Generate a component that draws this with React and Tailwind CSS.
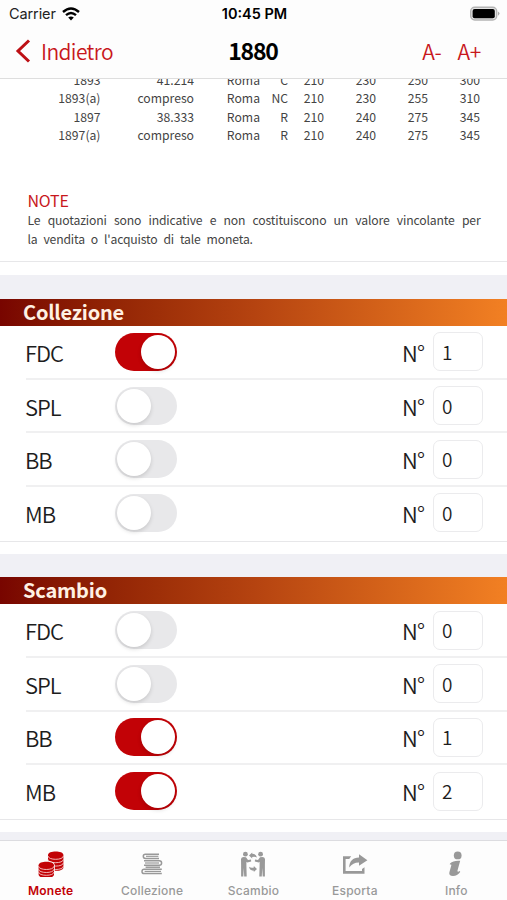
import { useState } from 'react';

const PRICES = [
  ['1893', '41.214', 'Roma', 'C', '210', '230', '250', '300'],
  ['1893(a)', 'compreso', 'Roma', 'NC', '210', '230', '255', '310'],
  ['1897', '38.333', 'Roma', 'R', '210', '240', '275', '345'],
  ['1897(a)', 'compreso', 'Roma', 'R', '210', '240', '275', '345'],
];

const COLLECTION = [
  { grade: 'FDC', on: true, count: 1 },
  { grade: 'SPL', on: false, count: 0 },
  { grade: 'BB', on: false, count: 0 },
  { grade: 'MB', on: false, count: 0 },
];

const EXCHANGE = [
  { grade: 'FDC', on: false, count: 0 },
  { grade: 'SPL', on: false, count: 0 },
  { grade: 'BB', on: true, count: 1 },
  { grade: 'MB', on: true, count: 2 },
];

function CoinStack({ x, y, rims }) {
  const bottom = 4 + rims.length * 3;
  return (
    <g transform={`translate(${x} ${y})`}>
      <path
        d={`M0 3.6C0-1 15.4-1 15.4 3.6V${bottom}C15.4 ${bottom + 4.6} 0 ${bottom + 4.6} 0 ${bottom}Z`}
        stroke="#fdfdfd"
        strokeWidth="1.6"
        paintOrder="stroke"
      />
      {rims.map((rim) => (
        <path key={rim} d={`M0 ${rim}C0 ${rim + 4.4} 15.4 ${rim + 4.4} 15.4 ${rim}`} fill="none" stroke="#f6c9c9" strokeWidth="0.9" />
      ))}
    </g>
  );
}

function CoinsIcon() {
  return (
    <svg width="26" height="26" viewBox="0 0 26 26" fill="currentColor">
      <CoinStack x={10} y={0.4} rims={[4.6, 8, 11.4, 14.8]} />
      <CoinStack x={0.6} y={10.6} rims={[4.6, 7.6, 10.4]} />
    </svg>
  );
}

function BooksIcon() {
  return (
    <svg width="22" height="24" viewBox="0 0 22 24" fill="none" stroke="currentColor" strokeWidth="1.5">
      <path d="M18 2.2H4.4a1.9 1.9 0 0 0 0 4.2H18" />
      <path d="M5 4.3H17.4" strokeWidth="1.2" />
      <path d="M3 8.7h15.3a2.2 2.2 0 0 1 0 4.6H3" />
      <path d="M4 11h14" strokeWidth="1.2" />
      <path d="M19 15.2H4.6" />
      <path d="M20.8 17.2H3.2a2.1 2.1 0 0 0 0 4.4h17.6" />
      <path d="M3.6 19.4H20" strokeWidth="1.2" />
    </svg>
  );
}

function ExchangeIcon() {
  return (
    <svg width="26" height="26" viewBox="0 0 26 26" fill="currentColor">
      <circle cx="5.4" cy="3.2" r="2.4" />
      <circle cx="20.6" cy="3.2" r="2.4" />
      <path d="M1 8Q1.4 6 3.6 6L6 6.2 8 9l3-.4.2 1.9-4 .9-.8-.7v4l.3 10.7H4.2L3.8 17l-.5 8.4H1.1V14Z" />
      <path d="M25 8Q24.6 6 22.4 6L20 6.2 18 9l-3-.4-.2 1.9 4 .9.8-.7v4l-.3 10.7h2.5l.4-8.4.5 8.4h2.2V14Z" />
      <path d="M9 4.4L12.2 1.4V2.8Q16 2.4 17 6.6 14.8 5.2 12.2 6V7.4Z" />
      <path d="M17 18L13.8 21V19.6Q10 20 9 15.8 11.2 17.2 13.8 16.4V15Z" />
    </svg>
  );
}

function ExportIcon() {
  return (
    <svg width="26" height="24" viewBox="0 0 26 24" fill="currentColor">
      <path d="M9.2 4.3H1v17.4h21.5v-6.4l-2.5 1.8v2H3.6V6.9h3.6Z" />
      <path d="M7.2 15.6C7.5 9.4 10.7 5.6 17 5.6V2.2l8.4 6-8.4 5.6v-3.3c-4-.1-7 1.5-9.8 5.1Z" />
    </svg>
  );
}

function InfoIcon() {
  return (
    <svg width="16" height="26" viewBox="0 0 16 26" fill="currentColor">
      <circle cx="9.7" cy="4.4" r="3.9" />
      <path d="M2 12.6C4.5 10.3 7.5 9.4 12.2 9.8l-2.7 9.8c-.3 1.3.4 1.6 2.4.5l.3.9C10.2 23.6 7.9 25.1 5 25.1c-3 0-4.2-1.5-3.6-3.8l1.8-6.5c.3-1.1.1-1.5-1.4-1.2Z" />
    </svg>
  );
}

const TABS = [
  { label: 'Monete', Icon: CoinsIcon, active: true },
  { label: 'Collezione', Icon: BooksIcon },
  { label: 'Scambio', Icon: ExchangeIcon },
  { label: 'Esporta', Icon: ExportIcon },
  { label: 'Info', Icon: InfoIcon },
];

function StatusBar() {
  return (
    <div className="grid h-7 grid-cols-3 items-center pl-[9px] pr-[7px] font-['Inter',sans-serif] text-[14.5px] text-[#222]">
      <div className="flex items-center gap-[6px]">
        <span className="tracking-[-0.1px]">Carrier</span>
        <svg width="18" height="14" viewBox="0 0 18 14" fill="none" stroke="#000" strokeWidth="2.4">
          <path d="M1 5Q9-2 17 5M4 8.2Q9 3.8 14 8.2" />
          <path d="M6.2 10.5Q9 8.3 11.8 10.5L9 13.5Z" fill="#000" stroke="none" />
        </svg>
      </div>
      <span className="whitespace-nowrap text-center font-semibold text-black">10:45 PM</span>
      <svg className="justify-self-end" width="31" height="16" viewBox="0 0 31 16">
        <rect x="1.7" y="1.2" width="26" height="12.8" rx="4" fill="#e4e4e4" stroke="#b4b4b4" strokeWidth="1.4" />
        <rect x="3.6" y="3" width="22.2" height="9.2" rx="2" fill="#000" />
        <path d="M29.2 5.4q2.4 2.2 0 4.4z" fill="#999" />
      </svg>
    </div>
  );
}

function NavBar() {
  return (
    <div className="grid h-[50px] grid-cols-3 items-center pb-[5px] pl-[15px] pr-[26px] text-[21px] text-[#c8171c]">
      <button className="flex items-center gap-[10px]">
        <svg width="16" height="24" viewBox="0 0 16 24" fill="none" stroke="#bd1015" strokeWidth="3">
          <path d="M14 1.5L3 12l11 10.5" />
        </svg>
        <span className="leading-6 tracking-[-0.6px] font-[350]">Indietro</span>
      </button>
      <h1 className="pb-[2px] pl-[10px] text-center text-[23px] font-bold leading-6 tracking-[-1.2px] text-black">1880</h1>
      <div className="flex justify-end gap-[16px] leading-6 tracking-[-0.3px] font-[350]">
        <button>A-</button>
        <button>A+</button>
      </div>
    </div>
  );
}

function PriceTable() {
  return (
    <div className="flex flex-col">
      {PRICES.map(([year, mintage, mint, rarity, ...values]) => (
        <div
          key={year}
          className="grid h-[18.2px] grid-cols-[100.5px_93.5px_66px_28px_36px_52px_52px_52px] items-center text-right text-[12.2px] leading-[17px] text-[#444]"
        >
          <span>{year}</span>
          <span>{mintage}</span>
          <span>{mint}</span>
          <span>{rarity}</span>
          {values.map((v, i) => (
            <span key={i}>{v}</span>
          ))}
        </div>
      ))}
    </div>
  );
}

function Toggle({ on, onChange }) {
  return (
    <button
      role="switch"
      aria-checked={on}
      onClick={onChange}
      className={`flex h-[38px] w-[62px] items-center rounded-full px-[2px] ${on ? 'justify-end bg-[#c20206]' : 'justify-start bg-[#e8e8ea]'}`}
    >
      <span className="h-[34px] w-[34px] rounded-full bg-white shadow-[0_2px_4px_rgba(0,0,0,0.14)]" />
    </button>
  );
}

function GradeSection({ title, initial }) {
  const [rows, setRows] = useState(initial);
  const toggle = (index) =>
    setRows(rows.map((r, i) => (i === index ? { ...r, on: !r.on } : r)));

  return (
    <section>
      <h2 className="flex h-[27px] items-center bg-linear-to-r from-[#780500] via-[#b54310] to-[#f28023] pb-[2px] pl-[23px] text-[20px] font-bold leading-6 tracking-[-0.2px] text-[#fff1e3]">
        {title}
      </h2>
      <div className="bg-white pb-3">
        {rows.map((row, i) => (
          <div key={row.grade} className={i === rows.length - 1 ? 'border-b border-[#e7e7e9]' : 'pl-[26px]'}>
            <div
              className={`flex h-[53.7px] items-center pr-6 text-[22px] font-[350] leading-7 text-[#1d1d1d] ${i === rows.length - 1 ? 'pb-[2px] pl-[26px]' : 'border-b-2 border-[#f0f0f1]'}`}
            >
              <span className="-ml-px w-[90px] tracking-[-1px]">{row.grade}</span>
              <Toggle on={row.on} onChange={() => toggle(i)} />
              <span className="ml-auto mr-[9px] tracking-[-0.9px]">N°</span>
              <span className="flex h-[39px] w-[50px] items-center rounded-[7px] border border-[#ebebed] pl-[8px] text-[19px]">
                {row.count}
              </span>
            </div>
          </div>
        ))}
      </div>
    </section>
  );
}

function TabBar() {
  return (
    <nav className="grid h-[60px] shrink-0 grid-cols-5 border-t border-[#dcdce0] bg-[#fdfdfd] pt-[9px] font-['Inter',sans-serif]">
      {TABS.map(({ label, Icon, active }) => (
        <button key={label} className={`flex flex-col items-center ${active ? 'text-[#c20206]' : 'text-[#999]'}`}>
          <span className="flex h-[27px] items-center">
            <Icon />
          </span>
          <span className={`mt-[6px] text-[12px] leading-4 tracking-[0.2px] ${active ? 'font-semibold' : 'font-medium'}`}>{label}</span>
        </button>
      ))}
    </nav>
  );
}

export default function App() {
  return (
    <div className="flex h-[900px] w-[507px] flex-col overflow-hidden bg-[#f0f0f5] font-['Noto_Sans_CJK_JP',sans-serif]">
      <header className="h-[79px] shrink-0 border-b border-[#dedede] bg-[#fdfdfd]">
        <StatusBar />
        <NavBar />
      </header>
      <main className="min-h-0 flex-1 overflow-hidden">
        <div className="-mt-[7.4px] h-[203.4px] bg-white">
          <div className="h-[190.4px] border-b border-[#e7e7e9]">
            <PriceTable />
            <div className="pl-[27.5px] pr-[26.5px] pt-[46px]">
              <h3 className="text-[16px] leading-5 tracking-[-0.2px] text-[#c8171c]">NOTE</h3>
              <p className="pt-px text-justify text-[12.2px] leading-[18.2px] tracking-[-0.15px] text-[#444] [word-spacing:3.3px]">
                Le quotazioni sono indicative e non costituiscono un valore vincolante per la vendita o l'acquisto di tale moneta.
              </p>
            </div>
          </div>
        </div>
        <div className="flex flex-col gap-[23.5px] pt-6">
          <GradeSection title="Collezione" initial={COLLECTION} />
          <GradeSection title="Scambio" initial={EXCHANGE} />
        </div>
      </main>
      <TabBar />
    </div>
  );
}
